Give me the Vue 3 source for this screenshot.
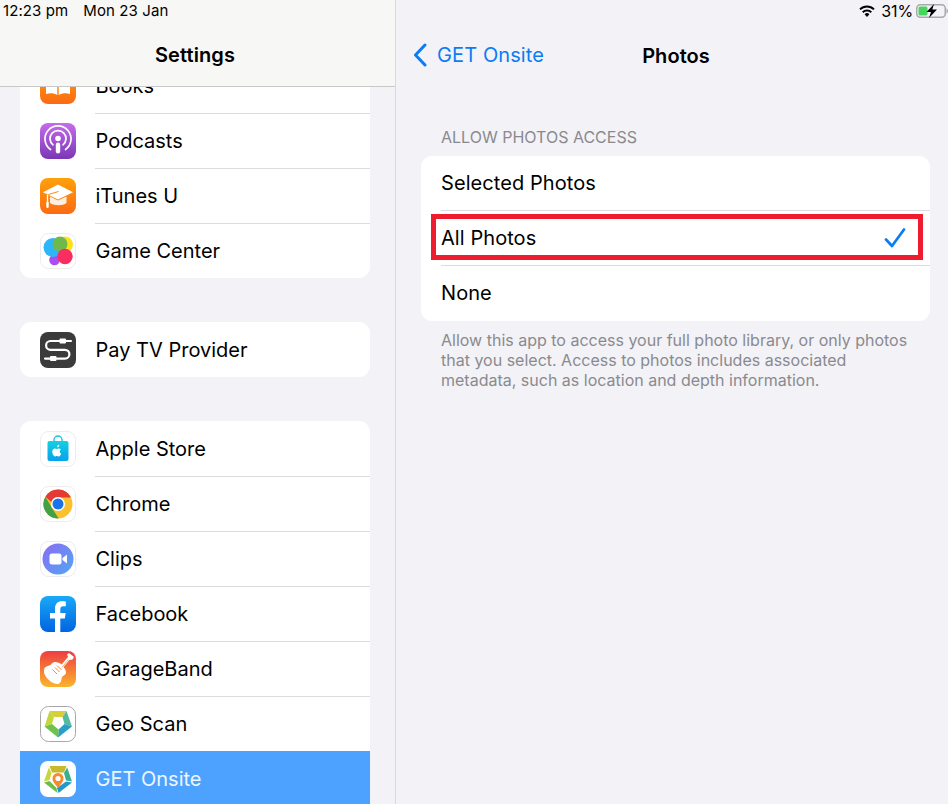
<script setup>
const groups = [
  { cls: 'first', items: [
    { id: 'books', label: 'Books' },
    { id: 'podcasts', label: 'Podcasts' },
    { id: 'itunes', label: 'iTunes U' },
    { id: 'game', label: 'Game Center' },
  ]},
  { cls: '', items: [{ id: 'tv', label: 'Pay TV Provider' }] },
  { cls: 'last', items: [
    { id: 'store', label: 'Apple Store' },
    { id: 'chrome', label: 'Chrome' },
    { id: 'clips', label: 'Clips' },
    { id: 'facebook', label: 'Facebook' },
    { id: 'garage', label: 'GarageBand' },
    { id: 'geo', label: 'Geo Scan' },
    { id: 'onsite', label: 'GET Onsite', active: true },
  ]},
]
const options = [
  { label: 'Selected Photos' },
  { label: 'All Photos', checked: true },
  { label: 'None' },
]
</script>

<template>
  <div class="ipad">
    <aside class="sidebar">
      <header class="side-head">
        <div class="clock"><span>12:23 pm</span><span>Mon 23 Jan</span></div>
        <h1 class="side-title">Settings</h1>
      </header>
      <div class="side-list">
        <section v-for="(g, gi) in groups" :key="gi" class="group" :class="g.cls">
          <div v-for="item in g.items" :key="item.id" class="row" :class="{ active: item.active }">
            <svg class="app" viewBox="0 0 36 36" aria-hidden="true">
              <defs>
                <linearGradient id="gOrange" x1="0" y1="0" x2="0" y2="1"><stop offset="0" stop-color="#ffa00a"/><stop offset="1" stop-color="#fb6a14"/></linearGradient>
                <linearGradient id="gPurple" x1="0" y1="0" x2="0" y2="1"><stop offset="0" stop-color="#c56cea"/><stop offset="1" stop-color="#7b37b5"/></linearGradient>
                <linearGradient id="gFb" x1="0" y1="0" x2="0" y2="1"><stop offset="0" stop-color="#19aaf8"/><stop offset="1" stop-color="#0064e0"/></linearGradient>
                <linearGradient id="gBand" x1="0" y1="0" x2="0" y2="1"><stop offset="0" stop-color="#ee3d42"/><stop offset="1" stop-color="#fbb42c"/></linearGradient>
                <linearGradient id="gStore" x1="0" y1="0" x2="0" y2="1"><stop offset="0" stop-color="#17cfe0"/><stop offset="1" stop-color="#07a2ec"/></linearGradient>
                <linearGradient id="gClips" x1="0" y1="0" x2="1" y2="1"><stop offset="0" stop-color="#8b6cf2"/><stop offset="1" stop-color="#4fa8f5"/></linearGradient>
              </defs>
              <template v-if="item.id === 'books'">
                <rect width="36" height="36" rx="8" fill="url(#gOrange)"/>
                <path d="M6 9c4-1.500 8.500-1 11.300 1v17c-3-1.800-7.500-2.200-11.300-1ZM30 9c-4-1.500-8.500-1-11.300 1v17c3-1.800 7.500-2.200 11.300-1Z" fill="#fff"/>
              </template>
              <template v-else-if="item.id === 'podcasts'">
                <rect width="36" height="36" rx="8" fill="url(#gPurple)"/>
                <g fill="none" stroke="#fff" stroke-width="1.700" stroke-linecap="round">
                  <path d="M10.500 26.500a13 13 0 1 1 15 0"/>
                  <path d="M13 21.800a8 8 0 1 1 10 0"/>
                </g>
                <circle cx="18" cy="15.500" r="2.800" fill="#fff"/>
                <rect x="15.800" y="19.500" width="4.400" height="11" rx="2.200" fill="#fff"/>
              </template>
              <template v-else-if="item.id === 'itunes'">
                <rect width="36" height="36" rx="8" fill="url(#gOrange)"/>
                <path d="M10 18.500v6.500c2.500 1.500 5.500 2.200 8.500 2.200s6-.7 8-2.200v-6.500L18 22.500Z" fill="#fff" opacity=".88"/>
                <path d="M3 14.200 18 6.500l15 7.700-15 7.300Z" fill="#fff"/>
                <path d="M18.500 13.500 8.500 16.500v7" fill="none" stroke="#fb8a12" stroke-width="1"/>
                <path d="M7.500 16.700v7" stroke="#fff" stroke-width="1.300"/>
                <rect x="6.300" y="23.500" width="2.400" height="6.500" rx="1.200" fill="#fff"/>
              </template>
              <template v-else-if="item.id === 'game'">
                <rect x=".5" y=".5" width="35" height="35" rx="8" fill="#fff" stroke="#ececec"/>
                <circle cx="14.500" cy="27" r="5.300" fill="#a94ff0"/>
                <circle cx="25" cy="11.500" r="8" fill="#ffe01a"/>
                <circle cx="13" cy="14.500" r="9.500" fill="#2eb6fb"/>
                <circle cx="20" cy="11" r="7.500" fill="#6fb84c"/>
                <circle cx="25" cy="23.500" r="7.700" fill="#fb2c5f"/>
              </template>
              <template v-else-if="item.id === 'tv'">
                <rect width="36" height="36" rx="8" fill="#3b3b3b"/>
                <g fill="none" stroke="#fff" stroke-width="2.200" stroke-linecap="round">
                  <path d="M20 9h-9.500a4.400 4.400 0 0 0 0 8.800h14.500a4.400 4.400 0 0 1 0 8.800H16"/>
                  <path d="M26 9h5M5 26.600h5"/>
                </g>
                <rect x="19.500" y="6.500" width="6.500" height="5" rx="1" fill="#fff"/>
                <rect x="10" y="24.100" width="6.500" height="5" rx="1" fill="#fff"/>
              </template>
              <template v-else-if="item.id === 'store'">
                <rect x=".5" y=".5" width="35" height="35" rx="8" fill="#fff" stroke="#ececec"/>
                <path d="M14 11V9a4 4 0 0 1 8 0v2" fill="none" stroke="#17c4e4" stroke-width="1.400"/>
                <rect x="7.500" y="10" width="21" height="20" rx="2" fill="url(#gStore)"/>
                <path d="M18.100 16.700c.6-.7 1.300-1 2-1 .1.800-.2 1.400-.6 1.900-.4.400-1 .7-1.500.6-.1-.6.200-1.100.6-1.500Zm-.4 3c.6 0 1.100-.4 1.900-.4.500 0 1.400.1 2 1-1.700 1.100-1.400 3.300.3 4-.4 1.100-1.400 2.700-2.300 2.700-.8 0-1.100-.5-1.900-.5s-1.100.5-1.800.5c-1.100 0-2.600-2.400-2.600-4.600 0-2.100 1.300-3.200 2.500-3.200.8 0 1.400.5 1.900.5Z" fill="#fff" transform="translate(-1.400 -2.400) scale(1.030)"/>
              </template>
              <template v-else-if="item.id === 'chrome'">
                <rect x=".5" y=".5" width="35" height="35" rx="8" fill="#fff" stroke="#ececec"/>
                <circle cx="18" cy="18" r="14.500" fill="#fbc02d"/>
                <path d="M5.500 10.700A14.500 14.500 0 0 1 31 11.500H18a6.800 6.800 0 0 0-6.500 4.800Z" fill="#e53935"/>
                <path d="M5.400 10.700 12 22l6.700 10.500A14.500 14.500 0 0 1 5.400 10.700Z" fill="#43a047"/>
                <circle cx="18" cy="18" r="7" fill="#fff"/>
                <circle cx="18" cy="18" r="5.500" fill="#1a73e8"/>
              </template>
              <template v-else-if="item.id === 'clips'">
                <rect x=".5" y=".5" width="35" height="35" rx="8" fill="#fff" stroke="#ececec"/>
                <circle cx="18" cy="18" r="15.500" fill="url(#gClips)"/>
                <rect x="9.500" y="12.500" width="12" height="11" rx="2.500" fill="#fff"/>
                <path d="m22.500 17 4.500-3.500v9L22.500 19Z" fill="#fff"/>
              </template>
              <template v-else-if="item.id === 'facebook'">
                <rect width="36" height="36" rx="8" fill="url(#gFb)"/>
                <path d="M15 36V22.500h-5V17h5v-4.400C15 7.800 17.800 5.300 22 5.300c1.500 0 3.200.2 3.800.3v4.700h-2.500c-2.200 0-3 1.200-3 2.900V17h5.400l-.9 5.500h-4.500V36Z" fill="#fff"/>
              </template>
              <template v-else-if="item.id === 'garage'">
                <rect width="36" height="36" rx="8" fill="url(#gBand)"/>
                <path d="M21 13.500c-2-1.300-4.500-2.500-7-2-1.700.3-2.200 2-3.300 2.700-1.700 1-4.400 1-5.400 3.400-1.100 2.700.4 6.700 3.500 9.600 3.200 3 7.200 5 10 3.600 2.400-1.200 1.700-4.200 2.800-6 .9-1.400 2.800-1.500 3.300-3.300.5-2-.9-4.400-3-6.500Z" fill="#fff" transform="translate(-1.500 -1.500) scale(1.100)"/>
                <path d="m19.500 18.500 10-12" stroke="#fff" stroke-width="3"/>
                <path d="m27 3.500 2-1.500 5 4-1.500 2.500-3 .5Z" fill="#fff"/>
                <path d="m17 14.500 4.500 4.500M15 16.500l4.500 4.500M12.500 18.500l4.500 4.500" stroke="#f58a3a" stroke-width="1"/>
                <path d="m22 16.500 6.500-8" stroke="#f58a3a" stroke-width=".7"/>
              </template>
              <template v-else-if="item.id === 'geo'">
                <rect x=".5" y=".5" width="35" height="35" rx="8" fill="#fff" stroke="#a8a8a8"/>
                <path d="M9.500 5h17l-4 6h-8.500Z" fill="#d6cf3a"/>
                <path d="M9.500 5l4.500 6-2 7-7.500 2.500Z" fill="#c4d63c"/>
                <path d="M26.500 5l5.500 15.500-7.500-2.500-2-7Z" fill="#55b9a0"/>
                <path d="M32 20.500 18 31.500l.5-8 6-5.500Z" fill="#2a9fc6"/>
                <path d="M4.500 20.500 12 18l6.500 5.500-.5 8Z" fill="#70c24c"/>
              </template>
              <template v-else>
                <rect width="36" height="36" rx="8" fill="#fff"/>
                <path d="M9.500 5h17l-2.500 6.500H12Z" fill="#c9b92f"/>
                <path d="M8.800 6.500 11.500 12l-2 7-5.500 1.500Z" fill="#c7d63c"/>
                <path d="M27.200 6.500 32 20.500l-6-1-2-7.500Z" fill="#36b08e"/>
                <path d="M32 21.500 18.500 32l-1.500-5 9-6.500Z" fill="#2597c9"/>
                <path d="M4 21.500 9.500 20l7 7 1 5Z" fill="#6bbf49"/>
                <path d="M18 27c-3-4-5.500-6.400-5.500-9.500a5.500 5.500 0 0 1 11 0C23.500 20.600 21 23 18 27Z" fill="#f58a2e"/>
                <circle cx="18" cy="17.500" r="2.600" fill="#fff"/>
              </template>
            </svg>
            <span class="row-label">{{ item.label }}</span>
          </div>
        </section>
      </div>
    </aside>

    <main class="detail">
      <div class="status">
        <svg class="wifi" viewBox="0 0 18 14" aria-hidden="true">
          <path d="M9 13 6.600 10.300a3.400 3.400 0 0 1 4.800 0Z" fill="#000"/>
          <path d="M4.700 8.300a6.200 6.200 0 0 1 8.600 0" fill="none" stroke="#000" stroke-width="1.900"/>
          <path d="M2 5.400a10 10 0 0 1 14 0" fill="none" stroke="#000" stroke-width="1.900"/>
        </svg>
        <span class="pct">31%</span>
        <svg class="battery" viewBox="0 0 32 14" aria-hidden="true">
          <rect x=".75" y=".75" width="28.500" height="12.500" rx="3.500" fill="none" stroke="#a9a9a9" stroke-width="1.500"/>
          <rect x="2.500" y="2.500" width="9" height="9" rx="1.500" fill="#46d65f"/>
          <path d="M18 0 10.500 8h4.500l-2 6 8-8.500h-4.700Z" fill="#000"/>
          <path d="M30.500 4.500v5c1-.3 1.500-1.300 1.500-2.500s-.5-2.200-1.500-2.500Z" fill="#a9a9a9"/>
        </svg>
      </div>
      <nav class="nav">
        <div class="back">
          <svg class="chev" viewBox="0 0 14 24" aria-hidden="true"><path d="M12 2 2.500 12l9.500 10" fill="none" stroke="#0a7cf5" stroke-width="3" stroke-linecap="round" stroke-linejoin="round"/></svg>
          <span>GET Onsite</span>
        </div>
        <h2 class="nav-title">Photos</h2>
      </nav>
      <div class="content">
        <h3 class="section-head">ALLOW PHOTOS ACCESS</h3>
        <div class="options">
          <div v-for="o in options" :key="o.label" class="option" :class="{ marked: o.checked }">
            <span>{{ o.label }}</span>
            <svg v-if="o.checked" class="check" viewBox="0 0 22 20" aria-hidden="true"><path d="M2 11.500 8 18 20 1.500" fill="none" stroke="#0a7cf5" stroke-width="2.700" stroke-linecap="round" stroke-linejoin="round"/></svg>
          </div>
        </div>
        <p class="note">Allow this app to access your full photo library, or only photos<br>that you select. Access to photos includes associated<br>metadata, such as location and depth information.</p>
      </div>
    </main>
  </div>
</template>

<style scoped>
.ipad {
  width: 948px;
  height: 804px;
  display: flex;
  overflow: hidden;
  background: #f2f2f7;
  font-family: Inter, "Liberation Sans", sans-serif;
  color: #000;
}
.sidebar {
  width: 395px;
  flex: none;
  display: flex;
  flex-direction: column;
  border-right: 1px solid #d9d9de;
}
.side-head {
  height: 86px;
  flex: none;
  background: #f7f7f5;
  border-bottom: 1px solid #c9c9c9;
}
.clock {
  display: flex;
  gap: 15px;
  padding: 2px 0 0 3px;
  font-size: 15px;
  line-height: 18px;
  letter-spacing: 0.1px;
}
.side-title {
  margin: 22px 5px 0 0;
  text-align: center;
  font-size: 20px;
  line-height: 26px;
  font-weight: 600;
  letter-spacing: 0.1px;
}
.side-list {
  flex: 1;
  overflow: hidden;
  padding: 0 25px 0 20px;
}
.group {
  background: #fff;
  border-radius: 11px;
  margin-bottom: 44px;
  overflow: hidden;
}
.group.first { margin-top: -29px; }
.group.last { padding-bottom: 40px; }
.row {
  height: 55px;
  box-sizing: border-box;
  padding: 1px 0 0 20px;
  display: flex;
  align-items: center;
  position: relative;
}
.row + .row::before {
  content: "";
  position: absolute;
  left: 75px;
  right: 0;
  top: 0;
  height: 1px;
  background: #dcdcde;
}
.row.active {
  background: #4da2ff;
  color: #fff;
}
.row.active::before { display: none; }
.app {
  width: 36px;
  height: 36px;
  flex: none;
}
.row-label {
  margin-left: 19.5px;
  font-size: 20px;
  letter-spacing: 0;
}
.row.active .row-label { color: #eef6ff; }
.detail {
  flex: 1;
  min-width: 0;
  display: flex;
  flex-direction: column;
}
.status {
  height: 22px;
  display: flex;
  align-items: center;
  justify-content: flex-end;
  font-size: 16px;
}
.wifi { width: 18px; height: 14px; }
.pct { margin: 0 3px 0 5px; letter-spacing: -0.1px; }
.battery { width: 32px; height: 14px; }
.nav {
  height: 65px;
  position: relative;
  display: flex;
  align-items: center;
  justify-content: center;
}
.back {
  position: absolute;
  left: 17px;
  top: 21px;
  display: flex;
  align-items: center;
  gap: 10px;
  color: #0a7cf5;
  font-size: 20px;
  letter-spacing: 0.1px;
}
.chev { width: 14px; height: 24px; }
.nav-title {
  margin: 0 0 -2px;
  font-size: 20px;
  font-weight: 600;
  letter-spacing: 0.05px;
  transform: translateX(4px);
}
.content {
  padding: 41px 18px 0 25px;
}
.section-head {
  margin: 0 0 9px 20px;
  font-size: 16px;
  line-height: 19px;
  font-weight: 400;
  color: #8a8a8e;
}
.options {
  background: #fff;
  border-radius: 11px;
  overflow: hidden;
}
.option {
  height: 55px;
  box-sizing: border-box;
  padding: 0 24px 1px 20px;
  display: flex;
  align-items: center;
  justify-content: space-between;
  font-size: 20px;
  letter-spacing: 0.07px;
  position: relative;
}
.option + .option::before {
  content: "";
  position: absolute;
  left: 20px;
  right: 0;
  top: -1px;
  height: 1px;
  background: #dcdcde;
}
.option.marked::after {
  content: "";
  position: absolute;
  left: 10px;
  right: 7px;
  top: 3px;
  height: 46px;
  box-sizing: border-box;
  border: 5px solid #ed1c2e;
}
.check { width: 22px; height: 20px; }
.note {
  margin: 9px 0 0 20px;
  font-size: 16px;
  line-height: 20px;
  color: #8a8a8e;
}
</style>
